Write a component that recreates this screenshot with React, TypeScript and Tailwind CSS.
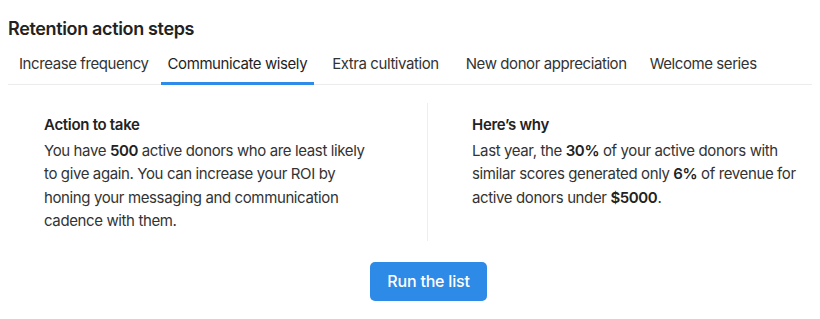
import React, { useState } from 'react';

const tabs = [
  { label: 'Increase frequency', ml: 'ml-[4px]' },
  { label: 'Communicate wisely', ml: 'ml-[5px]' },
  { label: 'Extra cultivation', ml: 'ml-[11px]' },
  { label: 'New donor appreciation', ml: 'ml-[13px]' },
  { label: 'Welcome series', ml: 'ml-[9px]' },
];

const App: React.FC = () => {
  const [active, setActive] = useState(1);

  return (
    <div className="w-[820px] h-[319px] bg-white text-[#2b2b2b] font-['Inter',sans-serif]">
      <div className="px-2 pt-[17px]">
        <h2 className="text-[18px] leading-[24px] font-semibold tracking-[-0.35px] text-[#222]">Retention action steps</h2>

        {/* Tabs */}
        <div className="mt-[12px] flex border-b border-[#ececec]">
          {tabs.map((tab, i) => (
            <button
              key={tab.label}
              onClick={() => setActive(i)}
              className={`${tab.ml} px-[7px] pb-[8px] pt-[1px] text-[15px] leading-[20px] tracking-[-0.42px] -mb-px border-b-[3px] ${
                i === active ? 'text-[#1f1f1f] border-[#2e8be8]' : 'text-[#333] border-transparent'
              }`}
            >
              {tab.label}
            </button>
          ))}
        </div>

        {/* Content */}
        <div className="mt-[18px] grid grid-cols-[420px_1fr]">
          <div className="pl-[36px] pr-6 pt-[12px] pb-[8px] border-r border-[#eeeeee]">
            <h3 className="text-[15px] leading-[20px] font-semibold tracking-[-0.3px] text-[#222]">Action to take</h3>
            <p className="mt-[4px] text-[15px] leading-[23.4px] tracking-[-0.38px] text-[#333] w-[330px]">
              You have <strong className="font-semibold text-[#222]">500</strong> active donors who are least likely to give again. You can increase your ROI by honing your messaging and communication cadence with them.
            </p>
          </div>
          <div className="pl-[44px] pr-6 pt-[12px]">
            <h3 className="text-[15px] leading-[20px] font-semibold tracking-[-0.3px] text-[#222]">Here’s why</h3>
            <p className="mt-[4px] text-[15px] leading-[23.4px] tracking-[-0.38px] text-[#333] w-[330px]">
              Last year, the <strong className="font-semibold text-[#222]">30%</strong> of your active donors with similar scores generated only <strong className="font-semibold text-[#222]">6%</strong> of revenue for active donors under <strong className="font-semibold text-[#222]">$5000</strong>.
            </p>
          </div>
        </div>

        <div className="mt-[21px] flex pl-[362px]">
          <button className="w-[117px] h-[39px] rounded-[5px] bg-[#2d8ae6] text-white text-[16px] tracking-[-0.2px] font-medium">
            Run the list
          </button>
        </div>
      </div>
    </div>
  );
};

export default App;
